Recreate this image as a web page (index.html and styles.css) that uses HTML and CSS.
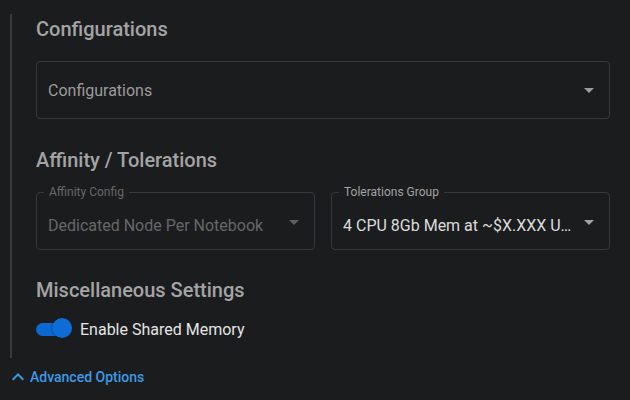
FILE: index.html
```html
<!DOCTYPE html>
<html>
<head>
<meta charset="utf-8">
<link rel="stylesheet" href="styles.css">
</head>
<body>
<div class="panel">
  <h2 class="heading">Configurations</h2>
  <div class="field">
    <div class="value placeholder">Configurations</div>
    <svg class="arrow" viewBox="0 0 24 24"><path d="M7 10l5 5 5-5z"/></svg>
  </div>

  <h2 class="heading h2">Affinity / Tolerations</h2>
  <div class="row">
    <div class="field labeled disabled">
      <span class="label">Affinity Config</span>
      <div class="value">Dedicated Node Per Notebook</div>
      <svg class="arrow" viewBox="0 0 24 24"><path d="M7 10l5 5 5-5z"/></svg>
    </div>
    <div class="field labeled">
      <span class="label">Tolerations Group</span>
      <div class="value filled">4 CPU 8Gb Mem at ~$X.XXX USD/hr</div>
      <svg class="arrow" viewBox="0 0 24 24"><path d="M7 10l5 5 5-5z"/></svg>
    </div>
  </div>

  <h2 class="heading h3">Miscellaneous Settings</h2>
  <label class="toggle-row">
    <span class="switch"><span class="track"></span><span class="thumb"></span></span>
    <span class="toggle-label">Enable Shared Memory</span>
  </label>
</div>
<div class="advanced">
  <svg class="chev" viewBox="0 0 24 24"><path d="M12 8l-6 6 1.41 1.41L12 10.83l4.59 4.58L18 14z"/></svg>
  <span>Advanced Options</span>
</div>
</body>
</html>
```

FILE: styles.css
```css
html, body {
  margin: 0;
  padding: 0;
  background: #1b1c1e;
  font-family: Roboto, "Liberation Sans", sans-serif;
}
body {
  width: 630px;
  height: 400px;
  overflow: hidden;
}
.panel {
  margin-top: 14px;
  margin-left: 10px;
  border-left: 2px solid #3b3b3d;
  padding: 3px 20px 10px 24px;
}
.heading {
  margin: 0;
  font-size: 20px;
  line-height: 24px;
  font-weight: 500;
  color: #a4a4a4;
}
.h2 { margin-top: 29px; }
.h3 { margin-top: 28px; }
.field {
  position: relative;
  margin-top: 20px;
  height: 58px;
  box-sizing: border-box;
  border: 1px solid #38393c;
  border-radius: 4px;
  display: flex;
  align-items: center;
  padding: 0 32px 0 11px;
}
.row {
  display: flex;
  gap: 16px;
  margin-top: 20px;
}
.row .field {
  flex: 1;
  margin-top: 0;
  min-width: 0;
}
.value {
  font-size: 16px;
  line-height: 23px;
  white-space: nowrap;
  overflow: hidden;
  text-overflow: ellipsis;
  padding-top: 1px;
}
.placeholder { color: #9b9b9b; }
.filled { color: #dcdcdc; }
.disabled .value { color: #676767; }
.labeled .value { padding-top: 9px; }
.label {
  position: absolute;
  top: -9px;
  left: 7px;
  padding: 0 5px;
  background: #1b1c1e;
  font-size: 12px;
  line-height: 17px;
  color: #a2a2a2;
}
.disabled .label { color: #686868; }
.arrow {
  position: absolute;
  right: 8px;
  top: 16px;
  width: 24px;
  height: 24px;
  fill: #9b9b9b;
}
.labeled .arrow { top: 17px; right: 8px; fill: #a2a2a2; }
.disabled .arrow { fill: #5f5f5f; top: 17px; }
.toggle-row {
  margin-top: 8px;
  height: 38px;
  display: flex;
  align-items: center;
}
.switch {
  position: relative;
  width: 36px;
  height: 20px;
  flex: none;
}
.track {
  position: absolute;
  left: 0;
  top: 4px;
  width: 34px;
  height: 13px;
  border-radius: 7px;
  background: #0b69d2;
}
.thumb {
  position: absolute;
  left: 16px;
  top: -1px;
  width: 20px;
  height: 20px;
  border-radius: 50%;
  background: #0d6cd6;
  box-shadow: -1px 0 1px rgba(0,0,0,0.25);
}
.toggle-label {
  margin-left: 8px;
  font-size: 16px;
  color: #e4e4e4;
}
.advanced {
  margin-top: 7px;
  display: flex;
  align-items: center;
  height: 24px;
  color: #3d9ae6;
  font-size: 14px;
  font-weight: 500;
}
.chev {
  width: 24px;
  height: 24px;
  margin-left: 6px;
  fill: #3d9ae6;
}
```
